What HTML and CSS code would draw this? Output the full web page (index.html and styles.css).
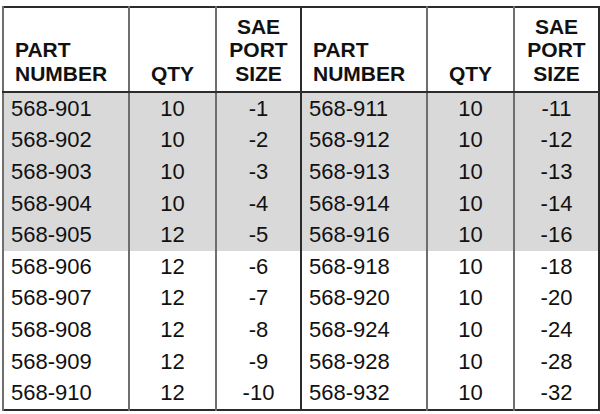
FILE: index.html
```html
<!DOCTYPE html>
<html>
<head>
<meta charset="utf-8">
<link rel="stylesheet" href="styles.css">
</head>
<body>
<div class="wrap">
<table class="parts">
<colgroup>
<col class="c-pn"><col class="c-qty"><col class="c-sae">
<col class="c-pn2"><col class="c-qty"><col class="c-sae">
</colgroup>
<thead>
<tr>
<th class="pn">PART<br>NUMBER</th><th>QTY</th><th>SAE<br>PORT<br>SIZE</th>
<th class="pn split">PART<br>NUMBER</th><th>QTY</th><th>SAE<br>PORT<br>SIZE</th>
</tr>
</thead>
<tbody>
<tr class="shade"><td class="pn">568-901</td><td>10</td><td>-1</td><td class="pn split">568-911</td><td>10</td><td>-11</td></tr>
<tr class="shade"><td class="pn">568-902</td><td>10</td><td>-2</td><td class="pn split">568-912</td><td>10</td><td>-12</td></tr>
<tr class="shade"><td class="pn">568-903</td><td>10</td><td>-3</td><td class="pn split">568-913</td><td>10</td><td>-13</td></tr>
<tr class="shade"><td class="pn">568-904</td><td>10</td><td>-4</td><td class="pn split">568-914</td><td>10</td><td>-14</td></tr>
<tr class="shade"><td class="pn">568-905</td><td>12</td><td>-5</td><td class="pn split">568-916</td><td>10</td><td>-16</td></tr>
<tr><td class="pn">568-906</td><td>12</td><td>-6</td><td class="pn split">568-918</td><td>10</td><td>-18</td></tr>
<tr><td class="pn">568-907</td><td>12</td><td>-7</td><td class="pn split">568-920</td><td>10</td><td>-20</td></tr>
<tr><td class="pn">568-908</td><td>12</td><td>-8</td><td class="pn split">568-924</td><td>10</td><td>-24</td></tr>
<tr><td class="pn">568-909</td><td>12</td><td>-9</td><td class="pn split">568-928</td><td>10</td><td>-28</td></tr>
<tr><td class="pn">568-910</td><td>12</td><td>-10</td><td class="pn split">568-932</td><td>10</td><td>-32</td></tr>
</tbody>
</table>
</div>
</body>
</html>
```
FILE: styles.css
```css
html, body {
  margin: 0;
  background: #fff;
}
body {
  font-family: "Liberation Sans", Arial, Helvetica, sans-serif;
  color: #111;
}
.wrap {
  padding: 6px 0 0 2px;
}
.parts {
  border-collapse: collapse;
  table-layout: fixed;
  width: 596px;
  border: 2px solid #2b2b2b;
}
.c-pn { width: 126px; }
.c-pn2 { width: 126px; }
.c-qty { width: 87px; }
.c-sae { width: 85px; }
.parts th {
  font-weight: bold;
  font-size: 21px;
  line-height: 23.5px;
  vertical-align: bottom;
  text-align: center;
  height: 77px;
  padding: 0 0 6px;
  border-bottom: 2px solid #2b2b2b;
  border-left: 2px solid #6e6e6e;
}
.parts td {
  font-size: 22px;
  height: 31.6px;
  padding: 0;
  text-align: center;
  border-left: 2px solid #6e6e6e;
}
.parts th.pn {
  text-align: left;
  padding-left: 11px;
}
.parts td.pn {
  text-align: left;
  padding-left: 7px;
}
.parts .split {
  border-left: 2px solid #2b2b2b;
}
.shade td {
  background: #d9d9d9;
}
```
